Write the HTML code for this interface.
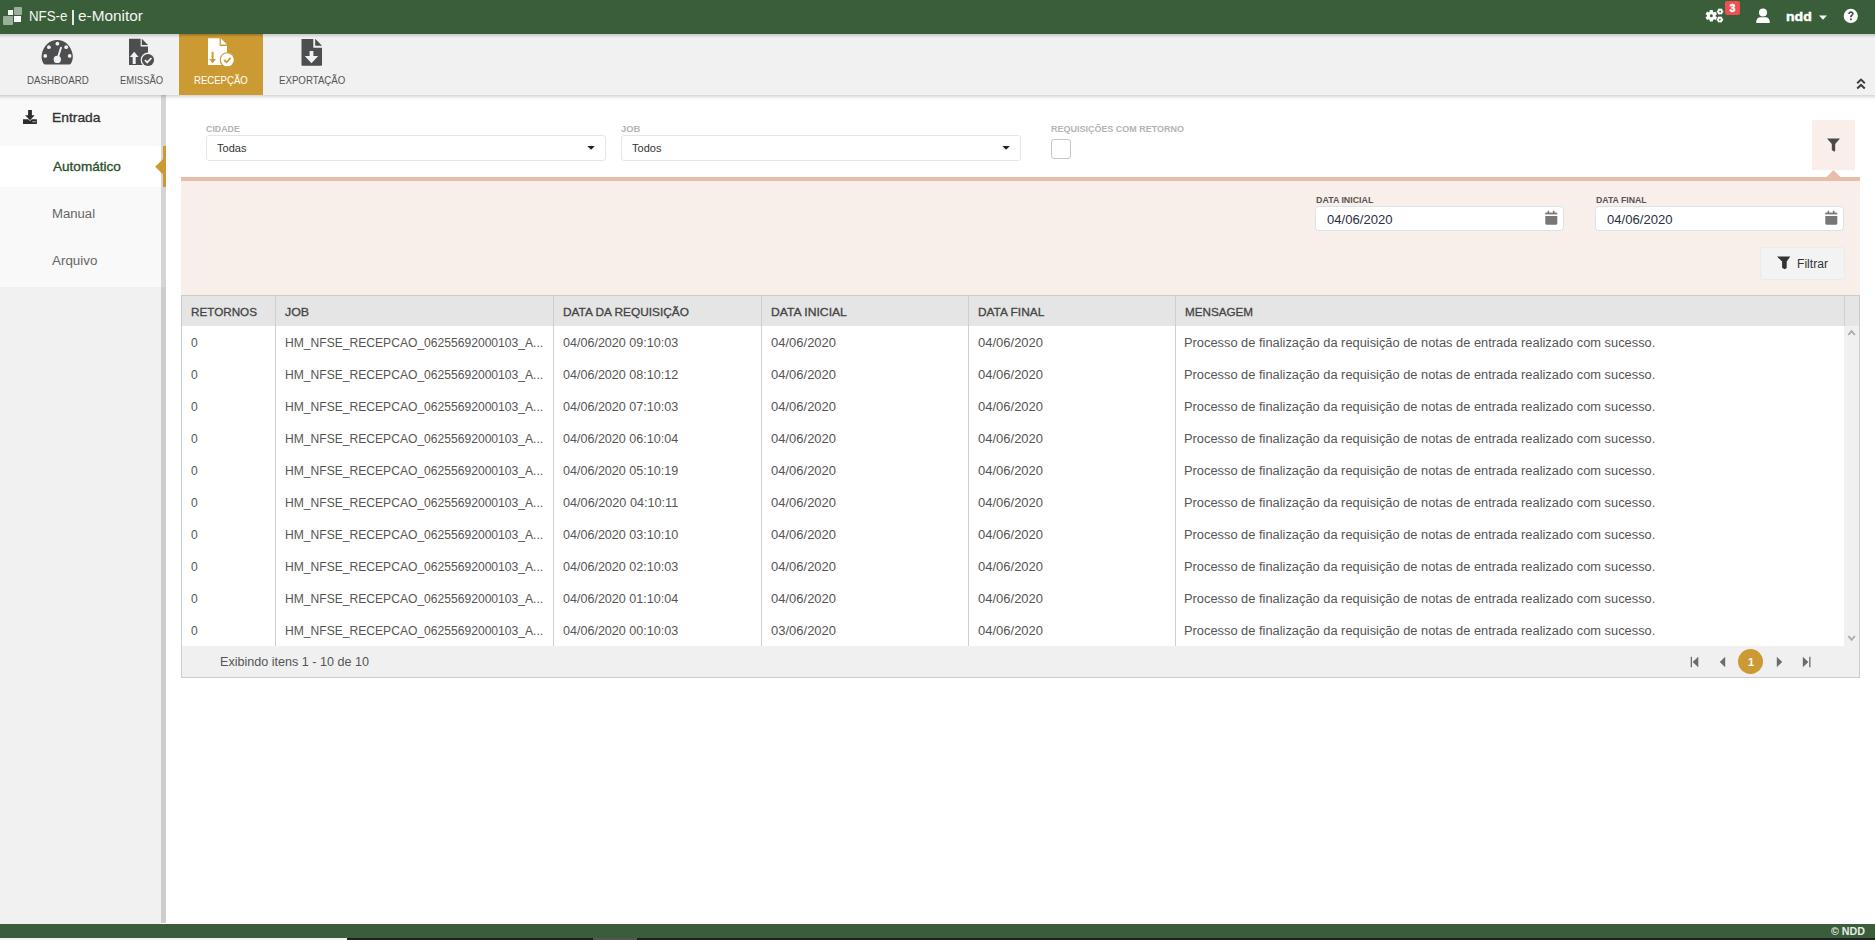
<!DOCTYPE html>
<html><head><meta charset="utf-8"><title>NFS-e | e-Monitor</title>
<style>
html,body{margin:0;padding:0;width:1875px;height:940px;overflow:hidden;background:#fff;font-family:"Liberation Sans",sans-serif;}
.a{position:absolute;}
.t{position:absolute;white-space:nowrap;line-height:1;transform-origin:0 0;}
svg{position:absolute;overflow:visible;}
</style></head><body>
<!-- header -->
<div class="a" style="left:0;top:0;width:1875px;height:34px;background:#3a5e39;"></div>
<!-- logo -->
<div class="a" style="left:3px;top:16px;width:10px;height:9px;background:#9aae98;border-radius:1px;"></div>
<div class="a" style="left:8px;top:10px;width:5px;height:5px;background:#fff;"></div>
<div class="a" style="left:14px;top:7px;width:8px;height:8px;background:#9aae98;border-radius:1px;"></div>
<div class="a" style="left:14px;top:16px;width:7px;height:6px;background:#fff;"></div>

<div class="a" style="left:72.4px;top:9.5px;width:1.3px;height:15px;background:#e4e9e4;"></div>
<!-- nav -->
<div class="a" style="left:0;top:34px;width:1875px;height:61px;background:#f1f1f1;"></div>
<div class="a" style="left:0;top:34px;width:1875px;height:4px;background:linear-gradient(#c9c9c9,rgba(241,241,241,0));"></div>
<div class="a" style="left:179px;top:34px;width:84px;height:61px;background:#cc9a33;"></div>
<div class="a" style="left:179px;top:34px;width:84px;height:3px;background:linear-gradient(rgba(120,85,20,.55),rgba(204,154,51,0));"></div>

<!-- dashboard icon -->
<svg style="left:41.1px;top:39.1px" width="32.8" height="27" viewBox="0 0 34 28">
  <path d="M2.5 25.3 C0.5 21.5 0.3 19 0.8 16 C2.1 7.2 8.9 1 16.8 1 C24.7 1 31.5 7.2 32.8 16 C33.3 19 33.1 21.5 31.1 25.3 C30.5 26.1 29.9 26.5 29.1 26.5 L4.5 26.5 C3.7 26.5 3.1 26.1 2.5 25.3 Z" fill="#4d4e50"/>
  <circle cx="17" cy="4.8" r="1.95" fill="#f1f1f1"/>
  <circle cx="8.2" cy="8.5" r="1.95" fill="#f1f1f1"/>
  <circle cx="26.1" cy="8.5" r="1.95" fill="#f1f1f1"/>
  <circle cx="4.4" cy="17.5" r="1.95" fill="#f1f1f1"/>
  <circle cx="29.7" cy="17.5" r="1.95" fill="#f1f1f1"/>
  <circle cx="16.9" cy="21.2" r="3.8" fill="#f1f1f1"/>
  <path d="M16.9 21.2 L20.7 9" fill="none" stroke="#f1f1f1" stroke-width="2" stroke-linecap="round"/>
</svg>
<!-- emissao icon -->
<svg style="left:128px;top:38px" width="36" height="30" viewBox="0 0 36 30">
  <path d="M1 0.8 L12.6 0.8 L12.6 8.5 L20 8.5 L20 27 L1 27 Z" fill="#4d4e50"/>
  <path d="M13.8 0.8 L20 7 L13.8 7 Z" fill="#4d4e50"/>
  <path d="M1.8 19 L6.2 13.8 L10.6 19 L7.7 19 L7.7 26 L4.7 26 L4.7 19 Z" fill="#f1f1f1"/>
  <circle cx="20" cy="22" r="7.4" fill="#f1f1f1"/>
  <circle cx="20" cy="22" r="6.1" fill="#4d4e50"/>
  <path d="M16.9 22.2 L19.2 24.4 L23.4 20" fill="none" stroke="#f1f1f1" stroke-width="1.8"/>
</svg>
<!-- recepcao icon -->
<svg style="left:207px;top:38px" width="36" height="30" viewBox="0 0 36 30">
  <path d="M1 0.2 L12.6 0.2 L12.6 8 L20 8 L20 27 L1 27 Z" fill="#fff"/>
  <path d="M13.8 0.4 L20 6.6 L13.8 6.6 Z" fill="#fff"/>
  <path d="M5.6 13.8 L5.6 24" fill="none" stroke="#cc9a33" stroke-width="1.9"/>
  <path d="M2.2 21 L5.6 25.2 L9 21 Z" fill="#cc9a33"/>
  <circle cx="20.3" cy="21.8" r="7.6" fill="#cc9a33"/>
  <circle cx="20.3" cy="21.8" r="6.5" fill="#fff"/>
  <path d="M17.1 22 L19.5 24.3 L23.7 19.8" fill="none" stroke="#cc9a33" stroke-width="1.8"/>
</svg>
<!-- exportacao icon -->
<svg style="left:300px;top:37.5px" width="24" height="30" viewBox="0 0 24 30">
  <path d="M1.5 1 L13.3 1 L13.3 9.7 L22 9.7 L22 26.8 C22 27.4 21.6 27.8 21 27.8 L2.5 27.8 C1.9 27.8 1.5 27.4 1.5 26.8 Z" fill="#4d4e50"/>
  <path d="M15.2 0.8 L22 7.8 L15.2 7.8 Z" fill="#4d4e50"/>
  <path d="M9.6 13 L13.4 13 L13.4 18 L18.2 18 L11.5 25.3 L4.8 18 L9.6 18 Z" fill="#f1f1f1"/>
</svg>

<!-- header right icons -->
<svg style="left:1704px;top:8px" width="22" height="16" viewBox="0 0 22 16">
  <g fill="#fff">
    <circle cx="7.3" cy="7.8" r="4.4"/>
    <g transform="translate(7.3 7.8)">
      <rect x="-1.6" y="-5.8" width="3.2" height="11.6" rx="0.5"/>
      <rect x="-1.6" y="-5.8" width="3.2" height="11.6" rx="0.5" transform="rotate(60)"/>
      <rect x="-1.6" y="-5.8" width="3.2" height="11.6" rx="0.5" transform="rotate(120)"/>
    </g>
    <g transform="translate(16.1 3.6)">
      <circle r="2.5"/>
      <rect x="-1" y="-3.2" width="2" height="6.4" transform="rotate(30)"/>
      <rect x="-1" y="-3.2" width="2" height="6.4" transform="rotate(90)"/>
      <rect x="-1" y="-3.2" width="2" height="6.4" transform="rotate(150)"/>
    </g>
    <g transform="translate(15.9 11.6)">
      <circle r="2.5"/>
      <rect x="-1" y="-3.2" width="2" height="6.4" transform="rotate(30)"/>
      <rect x="-1" y="-3.2" width="2" height="6.4" transform="rotate(90)"/>
      <rect x="-1" y="-3.2" width="2" height="6.4" transform="rotate(150)"/>
    </g>
  </g>
  <circle cx="7.3" cy="7.8" r="1.5" fill="#3a5e39"/>
  <circle cx="16.1" cy="3.6" r="0.9" fill="#3a5e39"/>
  <circle cx="15.9" cy="11.6" r="0.9" fill="#3a5e39"/>
</svg>
<div class="a" style="left:1725px;top:1px;width:15px;height:14px;background:#ee4f51;border-radius:2px;"></div>
<svg style="left:1756px;top:8px" width="15" height="16" viewBox="0 0 15 16">
  <circle cx="7" cy="4.4" r="4" fill="#fff"/>
  <path d="M0.2 14 C0.2 11 2.2 9.3 4.2 9.3 L9.8 9.3 C11.8 9.3 13.8 11 13.8 14 L13.8 14.2 C13.8 14.8 13.4 15 12.8 15 L1.2 15 C0.6 15 0.2 14.8 0.2 14.2 Z" fill="#fff"/>
</svg>
<svg style="left:1819px;top:15px" width="9" height="6" viewBox="0 0 9 6">
  <path d="M0 0.6 L8 0.6 L4 4.8 Z" fill="#fff"/>
</svg>
<svg style="left:1843px;top:8px" width="16" height="16" viewBox="0 0 16 16">
  <circle cx="7.8" cy="7.9" r="7.1" fill="#fff"/>
  <path d="M5.2 6.0 C5.2 4.3 6.4 3.3 7.9 3.3 C9.5 3.3 10.7 4.3 10.7 5.7 C10.7 7.6 8.7 7.6 8.7 9.3 L7 9.3 C7 6.9 8.9 7.0 8.9 5.8 C8.9 5.2 8.5 4.9 7.9 4.9 C7.3 4.9 6.9 5.3 6.9 6.0 Z" fill="#3a5e39"/>
  <rect x="7" y="10.4" width="1.8" height="1.8" fill="#3a5e39"/>
</svg>
<!-- collapse chevrons -->
<svg style="left:1856px;top:78px" width="11" height="12" viewBox="0 0 11 12">
  <path d="M1.2 5.2 L5 1.6 L8.8 5.2 M1.2 10.6 L5 7 L8.8 10.6" fill="none" stroke="#3d3d3d" stroke-width="2"/>
</svg>

<!-- sidebar -->
<div class="a" style="left:0;top:95px;width:161px;height:829px;background:#f1f1f1;"></div>
<div class="a" style="left:0;top:95px;width:161px;height:192px;background:#f9f9f9;"></div>
<div class="a" style="left:0;top:146px;width:163px;height:41px;background:#fff;"></div>
<div class="a" style="left:161px;top:95px;width:5px;height:828px;background:#cdcdcd;"></div>
<div class="a" style="left:161px;top:95px;width:5px;height:192px;background:#d5d5d5;"></div>
<div class="a" style="left:163px;top:146px;width:3px;height:41px;background:#cc9a33;"></div>
<svg style="left:155px;top:158px" width="9" height="18" viewBox="0 0 9 18">
  <path d="M8.5 0.5 L0.2 8.8 L8.5 17.1 Z" fill="#cc9a33"/>
</svg>
<!-- download icon -->
<svg style="left:22px;top:109px" width="16" height="16" viewBox="0 0 16 16">
  <path d="M1 10.6 C1 10.4 1.2 10.3 1.4 10.3 L14.5 10.3 C14.7 10.3 14.9 10.4 14.9 10.6 L14.9 14.6 C14.9 14.8 14.7 14.9 14.5 14.9 L1.4 14.9 C1.2 14.9 1 14.8 1 14.6 Z" fill="#2d2d2d"/>
  <path d="M6.1 0.9 L9.9 0.9 L9.9 6.2 L12.7 6.2 L8 11.2 L3.1 6.2 L6.1 6.2 Z" fill="#2d2d2d" stroke="#f9f9f9" stroke-width="1.1" paint-order="stroke"/>
  <rect x="10.3" y="12.1" width="3.6" height="1.2" fill="#8aa0b8"/>
</svg>
<!-- nav shadow -->
<div class="a" style="left:0;top:95px;width:1875px;height:5px;background:linear-gradient(rgba(0,0,0,.17),rgba(0,0,0,.06) 50%,rgba(0,0,0,0));"></div>

<!-- filters -->
<div class="a" style="left:206px;top:135px;width:398px;height:24px;border:1px solid #e6e6e6;border-radius:3px;background:#fff;"></div>
<svg style="left:585px;top:145px" width="12" height="6" viewBox="0 0 12 6"><path d="M2.3 1 L9.9 1 L6.1 4.8 Z" fill="#222"/></svg>
<div class="a" style="left:621px;top:135px;width:398px;height:24px;border:1px solid #e6e6e6;border-radius:3px;background:#fff;"></div>
<svg style="left:1000px;top:145px" width="12" height="6" viewBox="0 0 12 6"><path d="M2.3 1 L9.9 1 L6.1 4.8 Z" fill="#222"/></svg>
<div class="a" style="left:1051px;top:139px;width:18px;height:18px;border:1px solid #c6c6c6;border-radius:3px;background:#fff;"></div>
<div class="a" style="left:1812px;top:120px;width:43px;height:50px;background:#f9eee9;"></div>
<svg style="left:1826px;top:138px" width="16" height="15" viewBox="0 0 16 15">
  <path d="M1 0.5 L14 0.5 L9.2 6 L9.2 12.4 L8.3 13.7 L5.8 12 L5.8 6 Z" fill="#4a4a4c"/>
</svg>

<!-- peach panel -->
<div class="a" style="left:181px;top:177px;width:1679px;height:118px;background:#f9efea;"></div>
<div class="a" style="left:181px;top:177px;width:1679px;height:4px;background:#e8bea9;"></div>
<svg style="left:1826px;top:170px" width="15" height="8" viewBox="0 0 15 8"><path d="M0 7.5 L7.5 0 L15 7.5 Z" fill="#e8bea9"/></svg>
<div class="a" style="left:1315px;top:206px;width:247px;height:23px;border:1px solid #dbe3e8;border-radius:4px;background:#fff;"></div>
<div class="a" style="left:1595px;top:206px;width:247px;height:23px;border:1px solid #dbe3e8;border-radius:4px;background:#fff;"></div>
<svg style="left:1545px;top:210px" width="14" height="16" viewBox="0 0 14 16">
  <rect x="2.6" y="0.8" width="1.6" height="3" fill="#777"/><rect x="7.9" y="0.8" width="1.6" height="3" fill="#777"/>
  <path d="M0.3 2.6 L12.3 2.6 L12.3 4.4 L0.3 4.4 Z" fill="#777"/>
  <path d="M0.3 6 L12.3 6 L12.3 13.6 C12.3 14.3 11.8 14.8 11.1 14.8 L1.5 14.8 C0.8 14.8 0.3 14.3 0.3 13.6 Z" fill="#777"/>
</svg>
<svg style="left:1825px;top:210px" width="14" height="16" viewBox="0 0 14 16">
  <rect x="2.6" y="0.8" width="1.6" height="3" fill="#777"/><rect x="7.9" y="0.8" width="1.6" height="3" fill="#777"/>
  <path d="M0.3 2.6 L12.3 2.6 L12.3 4.4 L0.3 4.4 Z" fill="#777"/>
  <path d="M0.3 6 L12.3 6 L12.3 13.6 C12.3 14.3 11.8 14.8 11.1 14.8 L1.5 14.8 C0.8 14.8 0.3 14.3 0.3 13.6 Z" fill="#777"/>
</svg>
<div class="a" style="left:1760px;top:247px;width:83px;height:31px;border:1px solid #ebebeb;border-radius:3px;background:#f3f3f3;"></div>
<svg style="left:1776px;top:256px" width="16" height="15" viewBox="0 0 16 15">
  <path d="M1 0.6 L14.3 0.6 L10.7 5.6 L10.7 12 L8.6 13.2 L6.1 11.7 L6.1 5.6 Z" fill="#333"/>
</svg>

<!-- table -->
<div class="a" style="left:181px;top:295px;width:1677px;height:381px;border:1px solid #cccccc;background:#fff;"></div>
<div class="a" style="left:182px;top:296px;width:1677px;height:30px;background:#e5e5e5;"></div>
<div class="a" style="left:1844px;top:326px;width:15px;height:320px;background:#f0f0f0;"></div>
<div class="a" style="left:182px;top:646px;width:1677px;height:31px;background:#f0f0f0;"></div>
<!-- header dividers -->
<div class="a" style="left:275px;top:296px;width:1px;height:350px;background:#cfcfcf;"></div>
<div class="a" style="left:553px;top:296px;width:1px;height:350px;background:#cfcfcf;"></div>
<div class="a" style="left:761px;top:296px;width:1px;height:350px;background:#cfcfcf;"></div>
<div class="a" style="left:968px;top:296px;width:1px;height:350px;background:#cfcfcf;"></div>
<div class="a" style="left:1175px;top:296px;width:1px;height:350px;background:#cfcfcf;"></div>
<div class="a" style="left:1844px;top:296px;width:1px;height:30px;background:#cfcfcf;"></div>
<svg style="left:1847px;top:329px" width="10" height="7" viewBox="0 0 10 7"><path d="M1.3 6 L4.6 2.2 L7.9 6" fill="none" stroke="#aaaaaa" stroke-width="1.9"/></svg>
<svg style="left:1847px;top:635px" width="10" height="7" viewBox="0 0 10 7"><path d="M1.3 1 L4.6 4.8 L7.9 1" fill="none" stroke="#aaaaaa" stroke-width="1.9"/></svg>
<!-- pager -->
<svg style="left:1690px;top:656px" width="10" height="12" viewBox="0 0 10 12"><rect x="0.7" y="0.8" width="1.3" height="10.4" fill="#6b6b6b"/><path d="M8.3 0.8 L8.3 11.2 L2.6 6 Z" fill="#6b6b6b"/></svg>
<svg style="left:1719px;top:656px" width="8" height="12" viewBox="0 0 8 12"><path d="M6.2 0.8 L6.2 11.2 L0.8 6 Z" fill="#6b6b6b"/></svg>
<div class="a" style="left:1738px;top:649px;width:25px;height:25px;border-radius:50%;background:#cc9a33;"></div>
<svg style="left:1776px;top:656px" width="8" height="12" viewBox="0 0 8 12"><path d="M0.8 0.8 L0.8 11.2 L6.2 6 Z" fill="#6b6b6b"/></svg>
<svg style="left:1802px;top:656px" width="10" height="12" viewBox="0 0 10 12"><path d="M0.8 0.8 L0.8 11.2 L6.4 6 Z" fill="#6b6b6b"/><rect x="7.2" y="0.8" width="1.3" height="10.4" fill="#6b6b6b"/></svg>

<!-- footer -->
<div class="a" style="left:0;top:924px;width:1875px;height:14px;background:#3a5e39;"></div>
<div class="a" style="left:0;top:938px;width:1875px;height:2px;background:#1e1e1e;"></div>
<div class="a" style="left:0;top:938px;width:347px;height:2px;background:#f2f2f2;"></div>
<div class="a" style="left:593px;top:938px;width:44px;height:2px;background:#555555;"></div>

<div class="t" id="title" style="left:29.00px;top:8.30px;font-size:15px;color:#f4f6f4;transform:scaleX(0.8872);">NFS-e</div>
<div class="t" id="title2" style="left:78.40px;top:8.30px;font-size:15px;color:#f4f6f4;transform:scaleX(1.0236);">e-Monitor</div>
<div class="t" id="ndd" style="left:1786.00px;top:9.70px;font-size:13px;color:#ffffff;font-weight:700;-webkit-text-stroke:0.45px #fff;transform:scaleX(1.0816);">ndd</div>
<div class="t" id="n1" style="left:27.00px;top:74.69px;font-size:11px;color:#555555;transform:scaleX(0.8857);">DASHBOARD</div>
<div class="t" id="n2" style="left:120.00px;top:74.69px;font-size:11px;color:#555555;transform:scaleX(0.8600);">EMISSÃO</div>
<div class="t" id="n3" style="left:194.00px;top:74.69px;font-size:11px;color:#ffffff;transform:scaleX(0.8710);">RECEPÇÃO</div>
<div class="t" id="n4" style="left:279.00px;top:74.69px;font-size:11px;color:#555555;transform:scaleX(0.8800);">EXPORTAÇÃO</div>
<div class="t" id="s1" style="left:52.00px;top:111.97px;font-size:12.2px;color:#333333;-webkit-text-stroke:0.3px #333333;transform:scaleX(1.1368);">Entrada</div>
<div class="t" id="s2" style="left:53.00px;top:161.37px;font-size:12.2px;color:#2c4f2c;-webkit-text-stroke:0.3px #2c4f2c;transform:scaleX(1.1129);">Automático</div>
<div class="t" id="s3" style="left:52.00px;top:208.42px;font-size:12.5px;color:#666666;transform:scaleX(1.0500);">Manual</div>
<div class="t" id="s4" style="left:52.00px;top:255.42px;font-size:12.5px;color:#666666;transform:scaleX(1.0714);">Arquivo</div>
<div class="t" id="l1" style="left:206.00px;top:123.62px;font-size:9.9px;color:#b4b4b4;font-weight:700;transform:scaleX(0.8958);">CIDADE</div>
<div class="t" id="v1" style="left:217.00px;top:142.69px;font-size:11px;color:#333333;transform:scaleX(1.0011);">Todas</div>
<div class="t" id="l2" style="left:621.00px;top:123.62px;font-size:9.9px;color:#b4b4b4;font-weight:700;transform:scaleX(0.9526);">JOB</div>
<div class="t" id="v2" style="left:632.00px;top:142.69px;font-size:11px;color:#333333;transform:scaleX(1.0011);">Todos</div>
<div class="t" id="l3" style="left:1051.00px;top:123.62px;font-size:9.9px;color:#b4b4b4;font-weight:700;transform:scaleX(0.9092);">REQUISIÇÕES COM RETORNO</div>
<div class="t" id="l4" style="left:1316.00px;top:194.62px;font-size:9.9px;color:#555555;font-weight:600;transform:scaleX(0.8966);">DATA INICIAL</div>
<div class="t" id="v4" style="left:1327.00px;top:214.42px;font-size:12.5px;color:#2b3044;transform:scaleX(1.0476);">04/06/2020</div>
<div class="t" id="l5" style="left:1596.00px;top:194.62px;font-size:9.9px;color:#555555;font-weight:600;transform:scaleX(0.8824);">DATA FINAL</div>
<div class="t" id="v5" style="left:1607.00px;top:214.42px;font-size:12.5px;color:#2b3044;transform:scaleX(1.0476);">04/06/2020</div>
<div class="t" id="btn" style="left:1797.00px;top:258.42px;font-size:12.5px;color:#333333;transform:scaleX(0.9688);">Filtrar</div>
<div class="t" id="h0" style="left:191.00px;top:307.01px;font-size:11.8px;color:#444444;-webkit-text-stroke:0.3px #444444;transform:scaleX(0.9896);">RETORNOS</div>
<div class="t" id="h1" style="left:285.00px;top:307.01px;font-size:11.8px;color:#444444;-webkit-text-stroke:0.3px #444444;transform:scaleX(1.0508);">JOB</div>
<div class="t" id="h2" style="left:563.00px;top:307.01px;font-size:11.8px;color:#444444;-webkit-text-stroke:0.3px #444444;transform:scaleX(1.0037);">DATA DA REQUISIÇÃO</div>
<div class="t" id="h3" style="left:771.00px;top:307.01px;font-size:11.8px;color:#444444;-webkit-text-stroke:0.3px #444444;transform:scaleX(1.0305);">DATA INICIAL</div>
<div class="t" id="h4" style="left:978.00px;top:307.01px;font-size:11.8px;color:#444444;-webkit-text-stroke:0.3px #444444;transform:scaleX(1.0072);">DATA FINAL</div>
<div class="t" id="h5" style="left:1185.00px;top:307.01px;font-size:11.8px;color:#444444;-webkit-text-stroke:0.3px #444444;transform:scaleX(0.9889);">MENSAGEM</div>
<div class="t" id="r0a" style="left:191.00px;top:336.84px;font-size:12px;color:#555555;">0</div>
<div class="t" id="r0b" style="left:285.00px;top:336.84px;font-size:12px;color:#555555;transform:scaleX(1.0078);">HM_NFSE_RECEPCAO_06255692000103_A...</div>
<div class="t" id="r0c" style="left:563.00px;top:336.84px;font-size:12px;color:#555555;transform:scaleX(1.0455);">04/06/2020 09:10:03</div>
<div class="t" id="r0d" style="left:771.00px;top:336.84px;font-size:12px;color:#555555;transform:scaleX(1.0833);">04/06/2020</div>
<div class="t" id="r0e" style="left:978.00px;top:336.84px;font-size:12px;color:#555555;transform:scaleX(1.0833);">04/06/2020</div>
<div class="t" id="r0f" style="left:1184.00px;top:336.84px;font-size:12px;color:#555555;transform:scaleX(1.0705);">Processo de finalização da requisição de notas de entrada realizado com sucesso.</div>
<div class="t" id="r1a" style="left:191.00px;top:368.84px;font-size:12px;color:#555555;">0</div>
<div class="t" id="r1b" style="left:285.00px;top:368.84px;font-size:12px;color:#555555;transform:scaleX(1.0078);">HM_NFSE_RECEPCAO_06255692000103_A...</div>
<div class="t" id="r1c" style="left:563.00px;top:368.84px;font-size:12px;color:#555555;transform:scaleX(1.0455);">04/06/2020 08:10:12</div>
<div class="t" id="r1d" style="left:771.00px;top:368.84px;font-size:12px;color:#555555;transform:scaleX(1.0833);">04/06/2020</div>
<div class="t" id="r1e" style="left:978.00px;top:368.84px;font-size:12px;color:#555555;transform:scaleX(1.0833);">04/06/2020</div>
<div class="t" id="r1f" style="left:1184.00px;top:368.84px;font-size:12px;color:#555555;transform:scaleX(1.0705);">Processo de finalização da requisição de notas de entrada realizado com sucesso.</div>
<div class="t" id="r2a" style="left:191.00px;top:400.84px;font-size:12px;color:#555555;">0</div>
<div class="t" id="r2b" style="left:285.00px;top:400.84px;font-size:12px;color:#555555;transform:scaleX(1.0078);">HM_NFSE_RECEPCAO_06255692000103_A...</div>
<div class="t" id="r2c" style="left:563.00px;top:400.84px;font-size:12px;color:#555555;transform:scaleX(1.0455);">04/06/2020 07:10:03</div>
<div class="t" id="r2d" style="left:771.00px;top:400.84px;font-size:12px;color:#555555;transform:scaleX(1.0833);">04/06/2020</div>
<div class="t" id="r2e" style="left:978.00px;top:400.84px;font-size:12px;color:#555555;transform:scaleX(1.0833);">04/06/2020</div>
<div class="t" id="r2f" style="left:1184.00px;top:400.84px;font-size:12px;color:#555555;transform:scaleX(1.0705);">Processo de finalização da requisição de notas de entrada realizado com sucesso.</div>
<div class="t" id="r3a" style="left:191.00px;top:432.84px;font-size:12px;color:#555555;">0</div>
<div class="t" id="r3b" style="left:285.00px;top:432.84px;font-size:12px;color:#555555;transform:scaleX(1.0078);">HM_NFSE_RECEPCAO_06255692000103_A...</div>
<div class="t" id="r3c" style="left:563.00px;top:432.84px;font-size:12px;color:#555555;transform:scaleX(1.0455);">04/06/2020 06:10:04</div>
<div class="t" id="r3d" style="left:771.00px;top:432.84px;font-size:12px;color:#555555;transform:scaleX(1.0833);">04/06/2020</div>
<div class="t" id="r3e" style="left:978.00px;top:432.84px;font-size:12px;color:#555555;transform:scaleX(1.0833);">04/06/2020</div>
<div class="t" id="r3f" style="left:1184.00px;top:432.84px;font-size:12px;color:#555555;transform:scaleX(1.0705);">Processo de finalização da requisição de notas de entrada realizado com sucesso.</div>
<div class="t" id="r4a" style="left:191.00px;top:464.84px;font-size:12px;color:#555555;">0</div>
<div class="t" id="r4b" style="left:285.00px;top:464.84px;font-size:12px;color:#555555;transform:scaleX(1.0078);">HM_NFSE_RECEPCAO_06255692000103_A...</div>
<div class="t" id="r4c" style="left:563.00px;top:464.84px;font-size:12px;color:#555555;transform:scaleX(1.0455);">04/06/2020 05:10:19</div>
<div class="t" id="r4d" style="left:771.00px;top:464.84px;font-size:12px;color:#555555;transform:scaleX(1.0833);">04/06/2020</div>
<div class="t" id="r4e" style="left:978.00px;top:464.84px;font-size:12px;color:#555555;transform:scaleX(1.0833);">04/06/2020</div>
<div class="t" id="r4f" style="left:1184.00px;top:464.84px;font-size:12px;color:#555555;transform:scaleX(1.0705);">Processo de finalização da requisição de notas de entrada realizado com sucesso.</div>
<div class="t" id="r5a" style="left:191.00px;top:496.84px;font-size:12px;color:#555555;">0</div>
<div class="t" id="r5b" style="left:285.00px;top:496.84px;font-size:12px;color:#555555;transform:scaleX(1.0078);">HM_NFSE_RECEPCAO_06255692000103_A...</div>
<div class="t" id="r5c" style="left:563.00px;top:496.84px;font-size:12px;color:#555555;transform:scaleX(1.0550);">04/06/2020 04:10:11</div>
<div class="t" id="r5d" style="left:771.00px;top:496.84px;font-size:12px;color:#555555;transform:scaleX(1.0833);">04/06/2020</div>
<div class="t" id="r5e" style="left:978.00px;top:496.84px;font-size:12px;color:#555555;transform:scaleX(1.0833);">04/06/2020</div>
<div class="t" id="r5f" style="left:1184.00px;top:496.84px;font-size:12px;color:#555555;transform:scaleX(1.0705);">Processo de finalização da requisição de notas de entrada realizado com sucesso.</div>
<div class="t" id="r6a" style="left:191.00px;top:528.84px;font-size:12px;color:#555555;">0</div>
<div class="t" id="r6b" style="left:285.00px;top:528.84px;font-size:12px;color:#555555;transform:scaleX(1.0078);">HM_NFSE_RECEPCAO_06255692000103_A...</div>
<div class="t" id="r6c" style="left:563.00px;top:528.84px;font-size:12px;color:#555555;transform:scaleX(1.0455);">04/06/2020 03:10:10</div>
<div class="t" id="r6d" style="left:771.00px;top:528.84px;font-size:12px;color:#555555;transform:scaleX(1.0833);">04/06/2020</div>
<div class="t" id="r6e" style="left:978.00px;top:528.84px;font-size:12px;color:#555555;transform:scaleX(1.0833);">04/06/2020</div>
<div class="t" id="r6f" style="left:1184.00px;top:528.84px;font-size:12px;color:#555555;transform:scaleX(1.0705);">Processo de finalização da requisição de notas de entrada realizado com sucesso.</div>
<div class="t" id="r7a" style="left:191.00px;top:560.84px;font-size:12px;color:#555555;">0</div>
<div class="t" id="r7b" style="left:285.00px;top:560.84px;font-size:12px;color:#555555;transform:scaleX(1.0078);">HM_NFSE_RECEPCAO_06255692000103_A...</div>
<div class="t" id="r7c" style="left:563.00px;top:560.84px;font-size:12px;color:#555555;transform:scaleX(1.0455);">04/06/2020 02:10:03</div>
<div class="t" id="r7d" style="left:771.00px;top:560.84px;font-size:12px;color:#555555;transform:scaleX(1.0833);">04/06/2020</div>
<div class="t" id="r7e" style="left:978.00px;top:560.84px;font-size:12px;color:#555555;transform:scaleX(1.0833);">04/06/2020</div>
<div class="t" id="r7f" style="left:1184.00px;top:560.84px;font-size:12px;color:#555555;transform:scaleX(1.0705);">Processo de finalização da requisição de notas de entrada realizado com sucesso.</div>
<div class="t" id="r8a" style="left:191.00px;top:592.84px;font-size:12px;color:#555555;">0</div>
<div class="t" id="r8b" style="left:285.00px;top:592.84px;font-size:12px;color:#555555;transform:scaleX(1.0078);">HM_NFSE_RECEPCAO_06255692000103_A...</div>
<div class="t" id="r8c" style="left:563.00px;top:592.84px;font-size:12px;color:#555555;transform:scaleX(1.0455);">04/06/2020 01:10:04</div>
<div class="t" id="r8d" style="left:771.00px;top:592.84px;font-size:12px;color:#555555;transform:scaleX(1.0833);">04/06/2020</div>
<div class="t" id="r8e" style="left:978.00px;top:592.84px;font-size:12px;color:#555555;transform:scaleX(1.0833);">04/06/2020</div>
<div class="t" id="r8f" style="left:1184.00px;top:592.84px;font-size:12px;color:#555555;transform:scaleX(1.0705);">Processo de finalização da requisição de notas de entrada realizado com sucesso.</div>
<div class="t" id="r9a" style="left:191.00px;top:624.84px;font-size:12px;color:#555555;">0</div>
<div class="t" id="r9b" style="left:285.00px;top:624.84px;font-size:12px;color:#555555;transform:scaleX(1.0078);">HM_NFSE_RECEPCAO_06255692000103_A...</div>
<div class="t" id="r9c" style="left:563.00px;top:624.84px;font-size:12px;color:#555555;transform:scaleX(1.0455);">04/06/2020 00:10:03</div>
<div class="t" id="r9d" style="left:771.00px;top:624.84px;font-size:12px;color:#555555;transform:scaleX(1.0833);">03/06/2020</div>
<div class="t" id="r9e" style="left:978.00px;top:624.84px;font-size:12px;color:#555555;transform:scaleX(1.0833);">04/06/2020</div>
<div class="t" id="r9f" style="left:1184.00px;top:624.84px;font-size:12px;color:#555555;transform:scaleX(1.0705);">Processo de finalização da requisição de notas de entrada realizado com sucesso.</div>
<div class="t" id="pg" style="left:220.00px;top:656.42px;font-size:12.5px;color:#555555;transform:scaleX(1.0068);">Exibindo itens 1 - 10 de 10</div>
<div class="t" id="pn" style="left:1748.00px;top:656.69px;font-size:11px;color:#ffffff;font-weight:700;">1</div>
<div class="t" id="badge" style="left:1729.50px;top:2.61px;font-size:10.5px;color:#ffffff;font-weight:700;-webkit-text-stroke:0.4px #fff;">3</div>
<div class="t" id="foot" style="left:1831.00px;top:925.69px;font-size:11px;color:#e8ede8;font-weight:700;transform:scaleX(0.9700);">© NDD</div>
</body></html>
